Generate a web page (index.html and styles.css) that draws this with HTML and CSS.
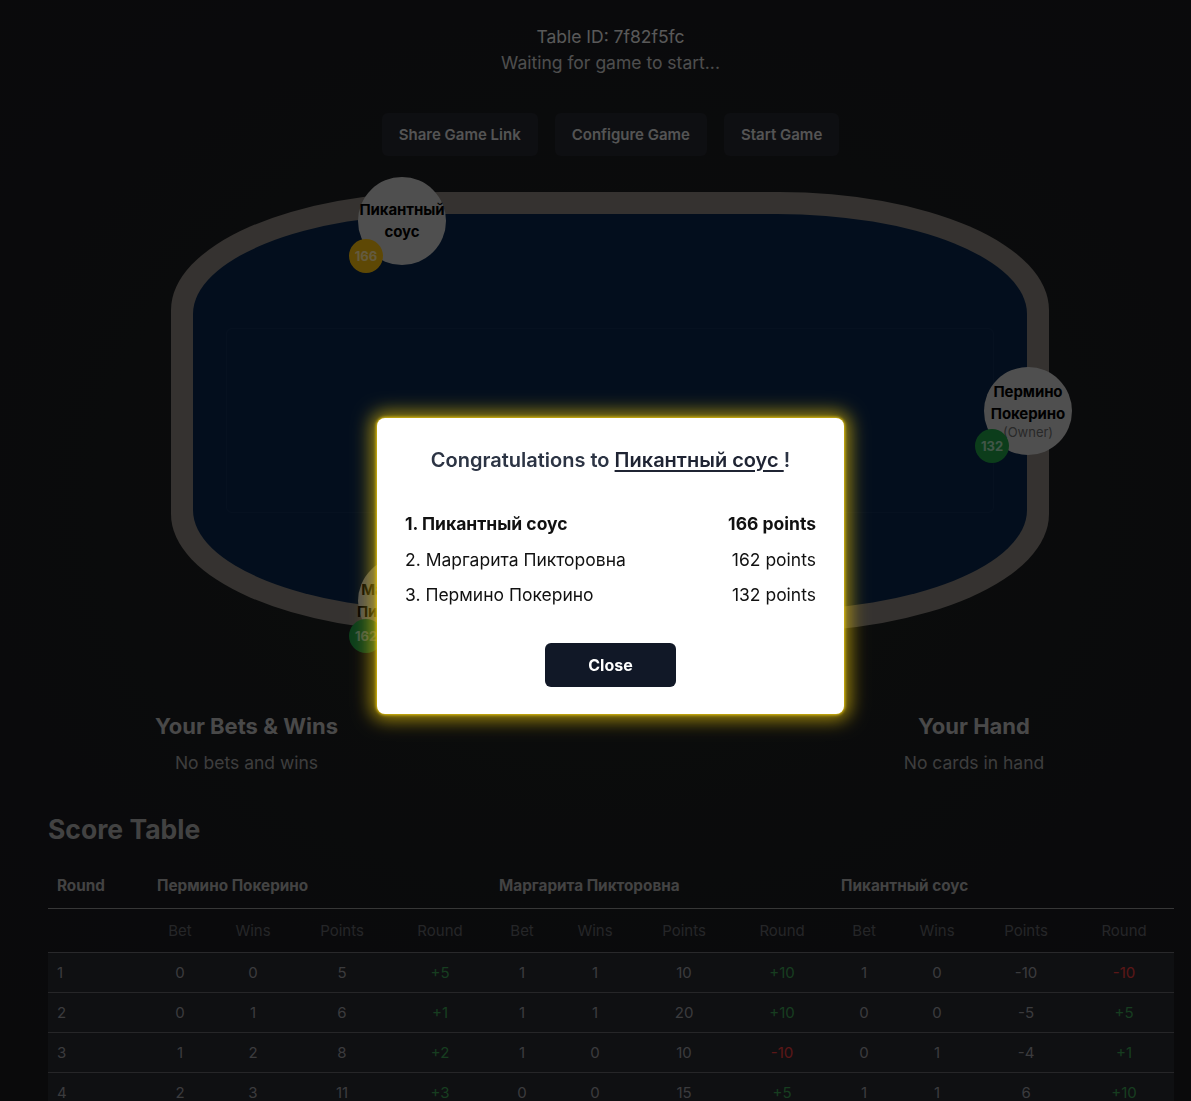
FILE: index.html
```html
<!DOCTYPE html>
<html lang="ru">
<head>
<meta charset="utf-8">
<title>Table 7f82f5fc</title>
<link rel="stylesheet" href="styles.css">
</head>
<body>
<div class="page">
  <header class="status">
    <div class="table-id">Table ID: 7f82f5fc</div>
    <div class="waiting">Waiting for game to start...</div>
  </header>

  <div class="actions">
    <button class="btn">Share Game Link</button>
    <button class="btn">Configure Game</button>
    <button class="btn">Start Game</button>
  </div>

  <div class="table-wrap">
    <div class="rim">
      <div class="felt">
        <div class="card-area"></div>
      </div>
    </div>
    <div class="seat seat-top">
      <div class="seat-name">Пикантный<br>соус</div>
      <span class="badge gold">166</span>
    </div>
    <div class="seat seat-right">
      <div class="seat-name">Пермино<br>Покерино</div>
      <div class="seat-owner">(Owner)</div>
      <span class="badge green">132</span>
    </div>
    <div class="seat seat-bottom">
      <div class="seat-name">Маргарита<br>Пикторовна</div>
      <span class="badge green">162</span>
    </div>
  </div>

  <section class="info">
    <div class="info-col">
      <h2 class="info-title">Your Bets &amp; Wins</h2>
      <p class="info-text">No bets and wins</p>
    </div>
    <div class="info-col"></div>
    <div class="info-col">
      <h2 class="info-title">Your Hand</h2>
      <p class="info-text">No cards in hand</p>
    </div>
  </section>

  <section class="scores">
    <h2 class="scores-title">Score Table</h2>
    <table class="score-table">
      <colgroup>
        <col class="c-round">
        <col class="c-bet"><col class="c-wins"><col class="c-points"><col class="c-delta">
        <col class="c-bet"><col class="c-wins"><col class="c-points"><col class="c-delta">
        <col class="c-bet"><col class="c-wins"><col class="c-points"><col class="c-delta">
      </colgroup>
      <thead>
        <tr class="head-names">
          <th class="left">Round</th>
          <th class="left" colspan="4">Пермино Покерино</th>
          <th class="left" colspan="4">Маргарита Пикторовна</th>
          <th class="left" colspan="4">Пикантный соус</th>
        </tr>
        <tr class="head-sub">
          <th></th>
          <th>Bet</th><th>Wins</th><th>Points</th><th>Round</th>
          <th>Bet</th><th>Wins</th><th>Points</th><th>Round</th>
          <th>Bet</th><th>Wins</th><th>Points</th><th>Round</th>
        </tr>
      </thead>
      <tbody>
        <tr>
          <td class="left">1</td>
          <td>0</td><td>0</td><td>5</td><td class="pos">+5</td>
          <td>1</td><td>1</td><td>10</td><td class="pos">+10</td>
          <td>1</td><td>0</td><td>-10</td><td class="neg">-10</td>
        </tr>
        <tr>
          <td class="left">2</td>
          <td>0</td><td>1</td><td>6</td><td class="pos">+1</td>
          <td>1</td><td>1</td><td>20</td><td class="pos">+10</td>
          <td>0</td><td>0</td><td>-5</td><td class="pos">+5</td>
        </tr>
        <tr>
          <td class="left">3</td>
          <td>1</td><td>2</td><td>8</td><td class="pos">+2</td>
          <td>1</td><td>0</td><td>10</td><td class="neg">-10</td>
          <td>0</td><td>1</td><td>-4</td><td class="pos">+1</td>
        </tr>
        <tr>
          <td class="left">4</td>
          <td>2</td><td>3</td><td>11</td><td class="pos">+3</td>
          <td>0</td><td>0</td><td>15</td><td class="pos">+5</td>
          <td>1</td><td>1</td><td>6</td><td class="pos">+10</td>
        </tr>
      </tbody>
    </table>
  </section>
</div>

<div class="overlay">
  <div class="modal">
    <h3 class="modal-title">Congratulations to <span class="winner">Пикантный соус </span>!</h3>
    <ol class="results">
      <li class="result first"><span>1. Пикантный соус</span><span>166 points</span></li>
      <li class="result"><span>2. Маргарита Пикторовна</span><span>162 points</span></li>
      <li class="result"><span>3. Пермино Покерино</span><span>132 points</span></li>
    </ol>
    <div class="modal-actions">
      <button class="close-btn">Close</button>
    </div>
  </div>
</div>
</body>
</html>
```

FILE: styles.css
```css
* { box-sizing: border-box; }

html, body {
  margin: 0;
  padding: 0;
}

body {
  font-family: Inter, "Noto Sans", "DejaVu Sans", sans-serif;
  background: radial-gradient(ellipse 900px 700px at 50% 45%, #1d221f 0%, #1b1c1f 55%, #19191d 100%);
  color: #d8d8d8;
  min-height: 1101px;
  overflow: hidden;
}

.page {
  width: 1125px;
  margin-left: 48px;
  padding-top: 24px;
}

.status {
  text-align: center;
  font-size: 17.5px;
  line-height: 26px;
}

.table-id { color: #dedede; }
.waiting { color: #c4c4c4; }

.actions {
  display: flex;
  justify-content: center;
  gap: 17px;
  margin-top: 37px;
}

.btn {
  font-family: inherit;
  font-size: 15px;
  font-weight: 600;
  line-height: 19px;
  color: #d2d2d2;
  background: #24262d;
  border: none;
  border-radius: 6px;
  padding: 12px 17px;
  height: 43px;
}

.table-wrap {
  position: relative;
  width: 878px;
  height: 440px;
  margin: 36px auto 0;
  left: -0.5px;
}

.rim {
  width: 100%;
  height: 100%;
  background: #847e78;
  border-radius: 270px / 118px;
  padding: 22px;
}

.felt {
  width: 100%;
  height: 100%;
  background: #08244a;
  border-radius: 250px / 100px;
  display: flex;
  align-items: center;
  justify-content: center;
}

.card-area {
  width: 768px;
  height: 185px;
  border: 1px solid rgba(255, 255, 255, 0.04);
  border-radius: 6px;
  margin-top: 16px;
}

.seat {
  position: absolute;
  width: 88px;
  height: 88px;
  border-radius: 50%;
  background: #c6c6c6;
  display: flex;
  flex-direction: column;
  align-items: center;
  justify-content: center;
  text-align: center;
}

.seat-top { left: 187px; top: -15px; }
.seat-right { left: 813px; top: 175px; }
.seat-bottom { left: 187px; top: 365px; }

.seat-name {
  font-size: 15px;
  font-weight: 700;
  line-height: 22px;
  color: #000;
  white-space: nowrap;
  letter-spacing: -0.1px;
}

.seat-right .seat-name { margin-top: -2px; }

.seat-owner {
  font-size: 13px;
  line-height: 16px;
  color: #666;
  margin-top: -1px;
}

.badge {
  position: absolute;
  left: -9px;
  top: 62px;
  width: 34px;
  height: 34px;
  border-radius: 50%;
  display: flex;
  align-items: center;
  justify-content: center;
  font-size: 13px;
  font-weight: 700;
  color: rgba(255, 255, 255, 0.6);
}

.badge.gold { background: #ecb50e; }
.badge.green { background: #1e9a44; }

.info {
  display: grid;
  grid-template-columns: 397px 1fr 398px;
  margin-top: 79px;
  text-align: center;
}

.info-title {
  margin: 0;
  font-size: 22px;
  font-weight: 700;
  line-height: 30px;
  color: #b6b6b6;
}

.info-text {
  margin: 10px 0 0;
  font-size: 17.5px;
  line-height: 24px;
  color: #9a9a9a;
}

.scores { margin-top: 38px; }

.scores-title {
  margin: 0 0 19px;
  font-size: 26.5px;
  font-weight: 700;
  line-height: 32px;
  color: #a6a6a6;
}

.score-table {
  width: 1126px;
  border-collapse: collapse;
  table-layout: fixed;
  font-size: 15px;
}

.c-round { width: 100px; }
.c-bet { width: 64px; }
.c-wins { width: 82px; }
.c-points { width: 96px; }
.c-delta { width: 100px; }

.score-table th,
.score-table td {
  text-align: center;
  padding: 0 9px;
  white-space: nowrap;
}

.score-table .left { text-align: left; }

.head-names th {
  height: 44px;
  font-weight: 700;
  font-size: 15.3px;
  color: #a8a8a8;
  border-bottom: 1px solid #8a8a8a;
}

.head-sub th {
  height: 44px;
  font-weight: 400;
  color: #5e5f65;
  border-bottom: 1px solid #66676c;
}

.score-table tbody tr {
  background: #26282f;
}

.score-table td {
  height: 40px;
  color: #939398;
  border-bottom: 1px solid #5f6065;
}

.score-table td.pos { color: #3a9a50; }
.score-table td.neg { color: #e03a3a; }

/* Modal */
.overlay {
  position: fixed;
  inset: 0;
  background: rgba(0, 0, 0, 0.6);
  display: flex;
  align-items: center;
  justify-content: center;
  padding: 31px 0 0 30px;
}

.modal {
  width: 467px;
  background: #fff;
  border-radius: 8px;
  padding: 28px 28px 27px;
  box-shadow: 0 0 3px 1px #e0c010, 0 0 18px 6px rgba(225, 190, 12, 0.7);
  color: #111;
}

.modal-title {
  margin: 0;
  text-align: center;
  font-size: 20px;
  font-weight: 600;
  line-height: 28px;
  color: #2c3444;
}

.winner {
  text-decoration: underline;
  text-underline-offset: 3px;
  text-decoration-thickness: 1.5px;
  color: #1f2433;
}

.results {
  list-style: none;
  margin: 32px 0 0;
  padding: 0;
}

.result {
  display: flex;
  justify-content: space-between;
  font-size: 17.5px;
  line-height: 35.5px;
  color: #111;
}

.result.first { font-weight: 700; }

.modal-actions {
  display: flex;
  justify-content: center;
  margin-top: 30px;
}

.close-btn {
  width: 131px;
  height: 44px;
  background: #111827;
  color: #fff;
  border: none;
  border-radius: 6px;
  font-family: inherit;
  font-size: 16px;
  font-weight: 700;
}
```
